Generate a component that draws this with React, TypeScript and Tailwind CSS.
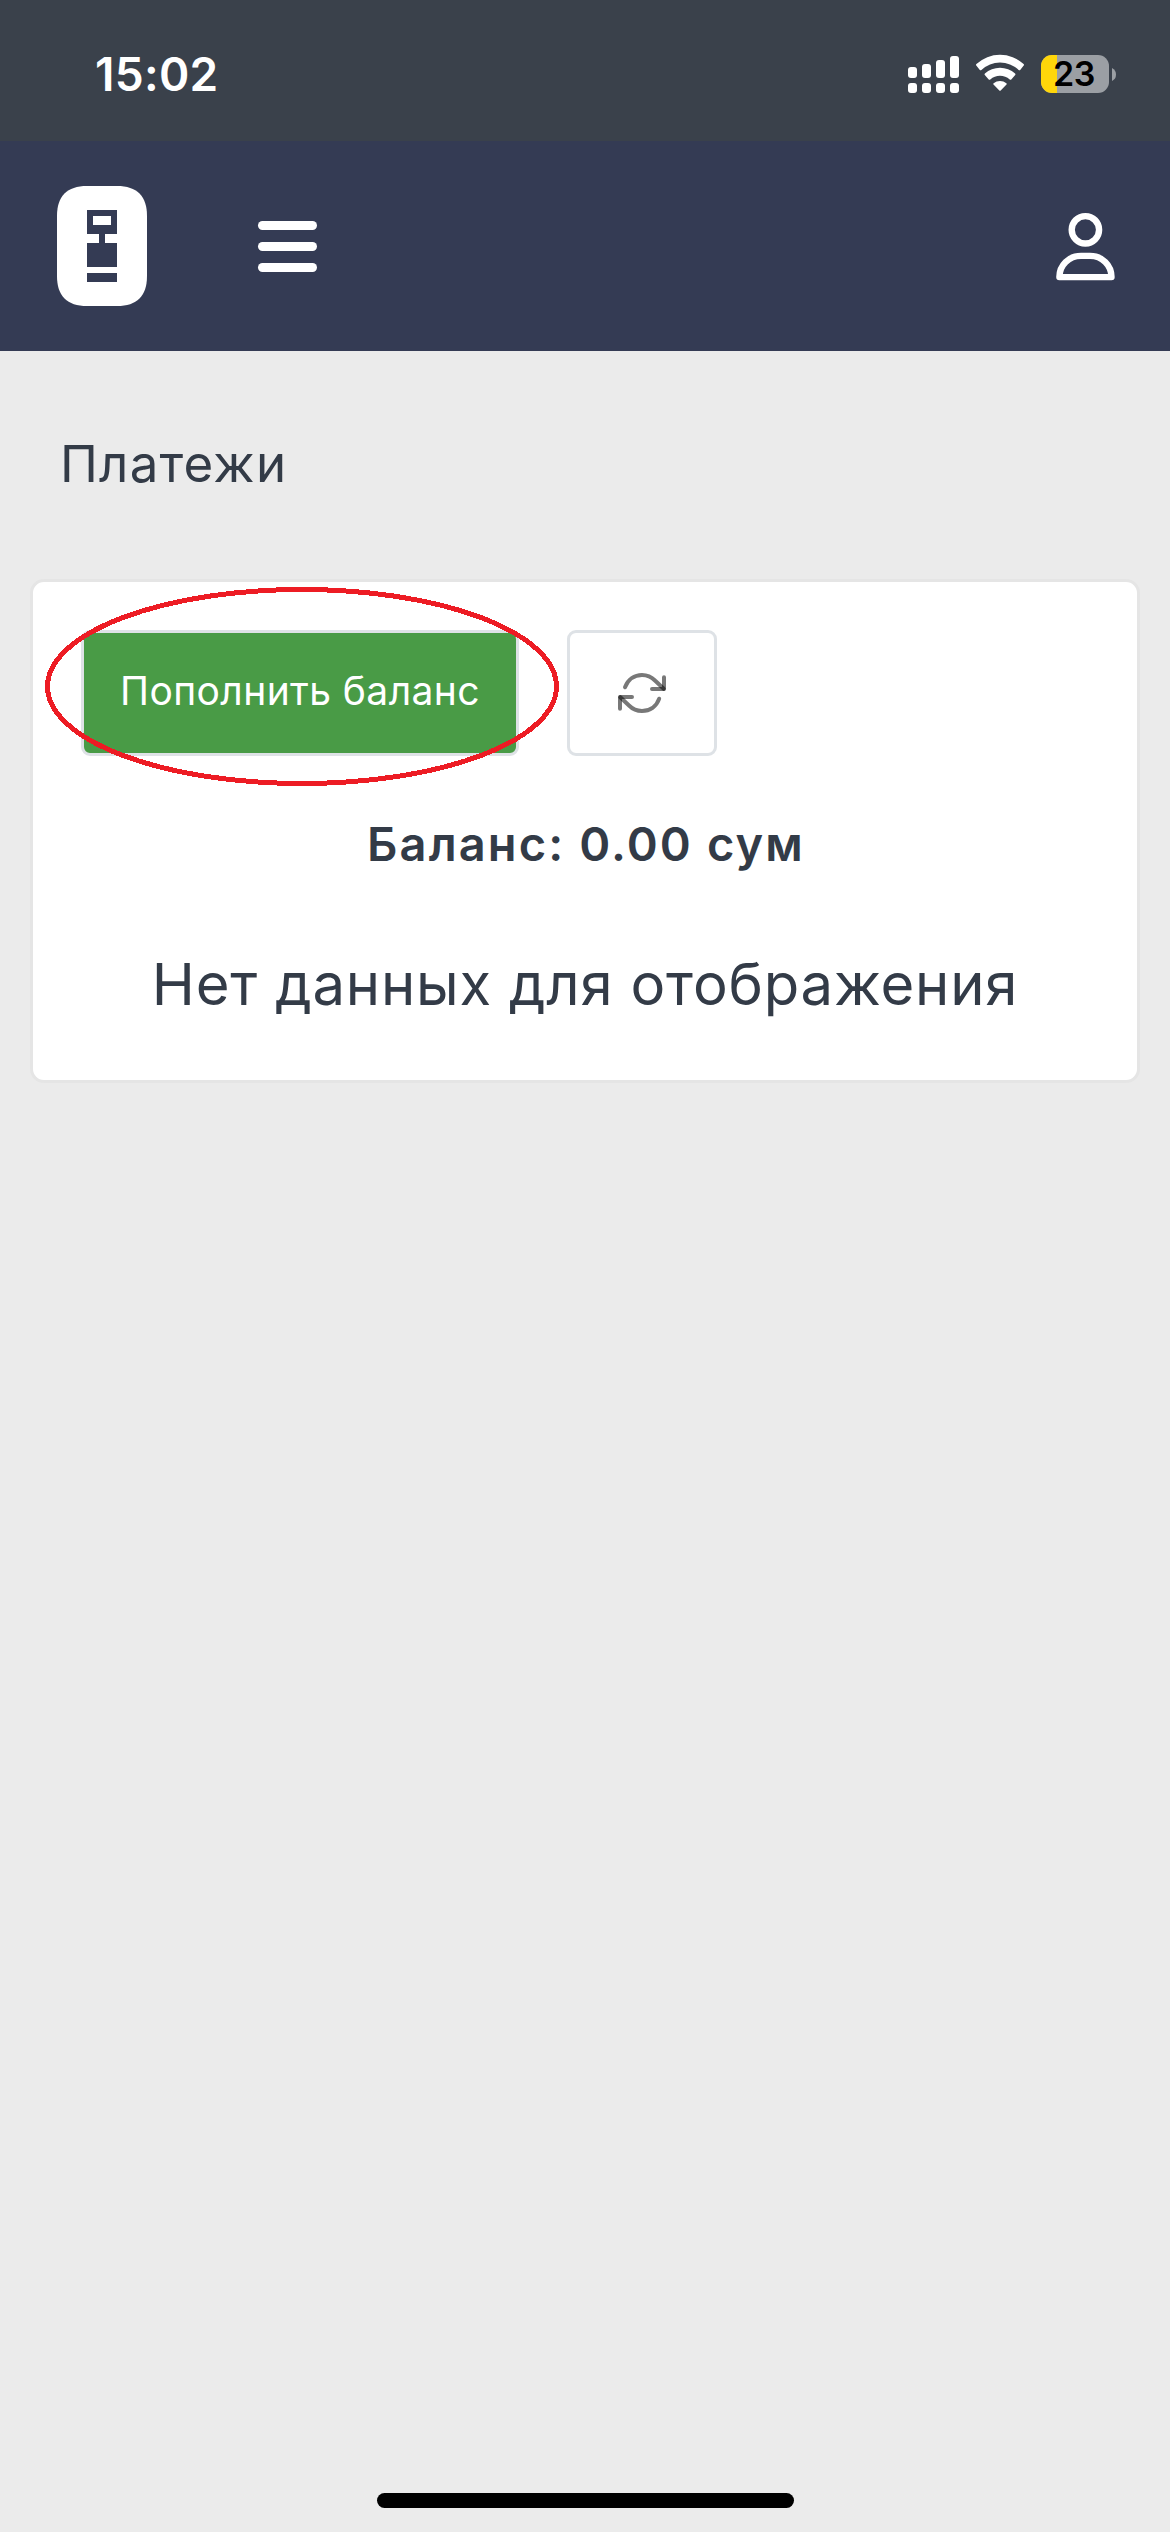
const labelDesign = "font-['Inter',sans-serif] text-[#333b47] whitespace-nowrap";
const buttonDesign =
  "flex h-[126px] items-center justify-center rounded-[9px] border-[3px] border-[#dee2e6]";

const StatusBar = () => (
  <div className="flex h-[141px] items-start justify-between bg-[#3a414b] pr-[54px] pl-[95px] font-['Inter',sans-serif]">
    <span className="mt-[47px] text-[46px] leading-[54px] font-semibold tracking-[0.3px] text-white">
      15:02
    </span>
    <svg className="mt-[50px] h-[48px] w-[209px]" viewBox="906 50 209 48">
      <g fill="#fff">
        <rect x="907" y="67" width="9" height="11" rx="3" />
        <rect x="921" y="64" width="9" height="14" rx="3" />
        <rect x="935" y="60" width="9" height="18" rx="3" />
        <rect x="949" y="56" width="9" height="22" rx="3" />
        <rect x="907" y="83" width="9" height="10" rx="3" />
        <rect x="921" y="83" width="9" height="10" rx="3" />
        <rect x="935" y="83" width="9" height="10" rx="3" />
        <rect x="949" y="83" width="9" height="10" rx="3" />
        <path d="M975.3 65.6Q974.6 64.9 975.4 64.1A34.5 34.5 0 0 1 1022.6 64.1Q1023.4 64.9 1022.7 65.6L1019.2 69.9Q1018.5 70.6 1017.6 69.9A27 27 0 0 0 980.4 69.9Q979.5 70.6 978.8 69.9Z" />
        <path d="M983.8 75.1Q983.1 74.4 983.9 73.6A22.5 22.5 0 0 1 1014.1 73.6Q1014.9 74.4 1014.2 75.1L1010.3 79.4Q1009.6 80.1 1008.7 79.4A15 15 0 0 0 989.3 79.4Q988.4 80.1 987.7 79.4Z" />
        <path d="M992.5 84.6Q991.8 83.9 992.6 83.2A10.5 10.5 0 0 1 1005.4 83.2Q1006.2 83.9 1005.5 84.6L999.7 90.5Q999 91.2 998.3 90.5Z" />
      </g>
      <clipPath id="battery">
        <rect x="1040" y="55" width="68" height="38" rx="11" />
      </clipPath>
      <g clipPath="url(#battery)">
        <rect x="1040" y="55" width="68" height="38" fill="#9b9fa4" />
        <rect x="1040" y="55" width="16" height="38" fill="#ffd60a" />
      </g>
      <path d="M1111 68Q1115 70 1115 74.5Q1115 79 1111 81Z" fill="#9b9fa4" />
      <text x="1073" y="86" textAnchor="middle" className="text-[34px] font-semibold tracking-[-0.5px]">
        23
      </text>
    </svg>
  </div>
);

const Logo = () => (
  <svg className="h-[120px] w-[90px]" viewBox="0 0 90 120">
    <path
      d="M30 0H60C80 0 90 10 90 30V90C90 110 80 120 60 120H30C10 120 0 110 0 90V30C0 10 10 0 30 0Z"
      fill="#fff"
    />
    <path
      d="M30 24H60V48H48V57H60V81H30V57H42V48H30ZM36 30V39H54V30ZM30 87H60V96H30Z"
      fill="#343b54"
      fillRule="evenodd"
    />
  </svg>
);

const Header = () => (
  <div className="flex h-[210px] items-center bg-[#343b54] pr-[54px] pl-[57px]">
    <Logo />
    <button className="ml-[111px] flex w-[59px] flex-col gap-[12px]">
      <span className="h-[9px] w-full rounded-full bg-white" />
      <span className="h-[9px] w-full rounded-full bg-white" />
      <span className="h-[9px] w-full rounded-full bg-white" />
    </button>
    <button className="ml-auto">
      <svg
        className="h-[70px] w-[61px]"
        viewBox="1055 211 61 70"
        fill="none"
        stroke="#fff"
        strokeWidth="6.4"
        strokeLinejoin="round"
      >
        <circle cx="1085.4" cy="229.8" r="13.7" />
        <path d="M1059.4 277.1C1059.4 265 1069 255.9 1081 255.9H1090C1102 255.9 1111.5 265 1111.5 277.1Z" />
      </svg>
    </button>
  </div>
);

const RefreshIcon = () => (
  <svg
    className="h-[44px] w-[52px]"
    viewBox="616 671 52 44"
    fill="none"
    stroke="#000"
    strokeOpacity="0.53"
    strokeWidth="4"
    strokeLinecap="round"
    strokeLinejoin="round"
  >
    <path d="M625 687.3C628 679.5 634.5 675 642 675C647.5 675 651.5 677 655 680.5L663.7 688.8" />
    <path d="M664 677.2V689H652" />
    <path d="M659.2 698.7C656.5 706.5 650 711 642 711C637 711 632.5 709 629 705.5L620.3 697.2" />
    <path d="M620 708.8V697H632" />
  </svg>
);

export default function App() {
  return (
    <div className="flex h-[2532px] w-[1170px] flex-col overflow-hidden bg-[#ebebeb]">
      <StatusBar />
      <Header />
      <h1 className={`${labelDesign} mt-[82px] ml-[60px] text-[51px] leading-[62px] tracking-[1.2px]`}>
        Платежи
      </h1>
      <div className="mt-[84px] mr-[30px] ml-[30px] h-[504px] rounded-[14px] border-[3px] border-[#e5e5e5] bg-white px-[48px] pt-[48px]">
        <div className="flex gap-[48px]">
          <div className="relative">
            <button
              className={`${buttonDesign} w-[438px] bg-[#499b46] pb-[3px] font-['Inter',sans-serif] text-[39px] tracking-[0.4px] whitespace-nowrap text-white`}
            >
              Пополнить баланс
            </button>
            {/* highlight around the top-up button */}
            <svg
              className="pointer-events-none absolute -top-[43px] -left-[36px] h-[199px] w-[514px]"
              viewBox="0 0 514 199"
              fill="none"
              stroke="#ed1c24"
              strokeWidth="5"
              shapeRendering="crispEdges"
            >
              <ellipse cx="257" cy="99.5" rx="254.5" ry="97" />
            </svg>
          </div>
          <button className={`${buttonDesign} w-[150px] bg-white`}>
            <RefreshIcon />
          </button>
        </div>
        <p className={`${labelDesign} mt-[60px] pl-[2px] text-center text-[47px] leading-[56px] font-semibold tracking-[2.1px]`}>
          Баланс: 0.00 сум
        </p>
        <p className={`${labelDesign} mt-[76px] text-center text-[58px] leading-[72px] tracking-[0.8px]`}>
          Нет данных для отображения
        </p>
      </div>
      <div className="mx-auto mt-auto mb-[24px] h-[15px] w-[417px] rounded-full bg-black" />
    </div>
  );
}
